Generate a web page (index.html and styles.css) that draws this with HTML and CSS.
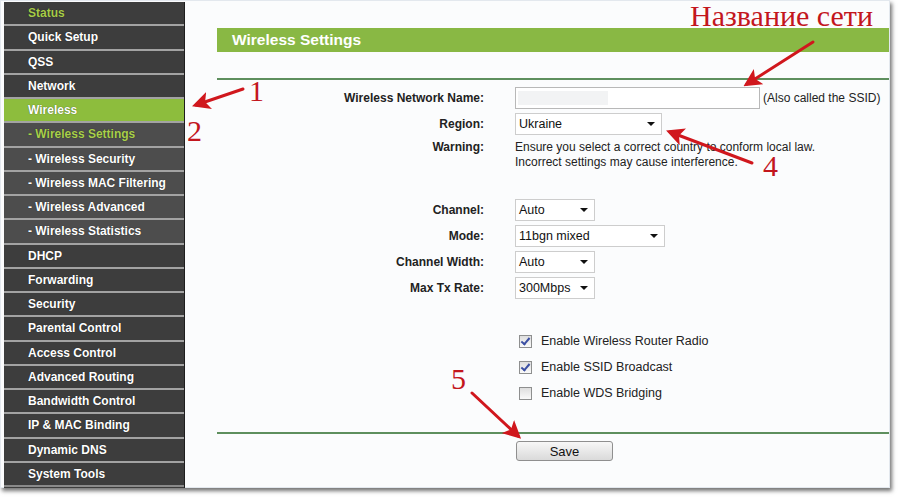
FILE: index.html
```html
<!DOCTYPE html>
<html lang="en">
<head>
    <meta charset="UTF-8">
    <title>Wireless Settings</title>
    <link rel="stylesheet" href="styles.css">
</head>
<body>

    <div class="frame">
        <!-- Left menu -->
        <div class="menu">
            <div class="item status">Status</div>
            <div class="item">Quick Setup</div>
            <div class="item">QSS</div>
            <div class="item">Network</div>
            <div class="item active">Wireless</div>
            <div class="item sub current">- Wireless Settings</div>
            <div class="item sub">- Wireless Security</div>
            <div class="item sub">- Wireless MAC Filtering</div>
            <div class="item sub">- Wireless Advanced</div>
            <div class="item sub">- Wireless Statistics</div>
            <div class="item">DHCP</div>
            <div class="item">Forwarding</div>
            <div class="item">Security</div>
            <div class="item">Parental Control</div>
            <div class="item">Access Control</div>
            <div class="item">Advanced Routing</div>
            <div class="item">Bandwidth Control</div>
            <div class="item">IP &amp; MAC Binding</div>
            <div class="item">Dynamic DNS</div>
            <div class="item">System Tools</div>
        </div>

        <!-- Settings panel -->
        <div class="panel">
            <div class="title-bar">Wireless Settings</div>
            <div class="rule top-rule"></div>

            <div class="row row-name">
                <div class="label">Wireless Network Name:</div>
                <div class="value">
                    <div class="text-box"><span class="blur"></span></div>
                    <span class="note">(Also called the SSID)</span>
                </div>
            </div>
            <div class="row">
                <div class="label">Region:</div>
                <div class="value">
                    <div class="select w-region">Ukraine</div>
                </div>
            </div>
            <div class="row warning">
                <div class="label">Warning:</div>
                <div class="value">Ensure you select a correct country to conform local law.<br>Incorrect settings may cause interference.</div>
            </div>

            <div class="row row-channel">
                <div class="label">Channel:</div>
                <div class="value"><div class="select w-small">Auto</div></div>
            </div>
            <div class="row">
                <div class="label">Mode:</div>
                <div class="value"><div class="select w-mode">11bgn mixed</div></div>
            </div>
            <div class="row">
                <div class="label">Channel Width:</div>
                <div class="value"><div class="select w-small">Auto</div></div>
            </div>
            <div class="row">
                <div class="label">Max Tx Rate:</div>
                <div class="value"><div class="select w-small">300Mbps</div></div>
            </div>

            <div class="checks">
                <div class="check-row"><span class="box checked"></span>Enable Wireless Router Radio</div>
                <div class="check-row"><span class="box checked"></span>Enable SSID Broadcast</div>
                <div class="check-row"><span class="box"></span>Enable WDS Bridging</div>
            </div>

            <div class="rule bottom-rule"></div>
            <div class="actions">
                <button class="save-btn">Save</button>
            </div>
        </div>
    </div>

    <!-- Red notes drawn over the screenshot -->
    <svg class="notes" width="900" height="500" viewBox="0 0 900 500">
        <defs>
            <marker id="head" markerWidth="6" markerHeight="6" refX="4.6" refY="3" orient="auto" markerUnits="strokeWidth">
                <path d="M0,0 L6,3 L0,6 L1.4,3 Z" fill="#d0171d"/>
            </marker>
        </defs>
        <g stroke="#d0171d" stroke-width="3" stroke-linecap="round" fill="none" marker-end="url(#head)">
            <line x1="243" y1="89" x2="196" y2="105"/>
            <line x1="813" y1="42" x2="747" y2="84"/>
            <line x1="752" y1="163" x2="670" y2="132"/>
            <line x1="472" y1="393" x2="518" y2="436"/>
        </g>
        <g class="note-text" fill="#c3161d">
            <text x="690" y="26" font-size="30">Название сети</text>
            <text x="249" y="101" font-size="30">1</text>
            <text x="187" y="141" font-size="30">2</text>
            <text x="763" y="176" font-size="30">4</text>
            <text x="451" y="389" font-size="30">5</text>
        </g>
    </svg>

</body>
</html>
```

FILE: styles.css
```css
* {
    margin: 0;
    padding: 0;
    box-sizing: border-box;
    font-family: 'Liberation Sans', Arial, sans-serif;
}
body {
    width: 900px;
    height: 500px;
    background: #ffffff;
    position: relative;
    overflow: hidden;
}
.frame {
    display: flex;
    width: 890px;
    height: 488px;
    padding: 1px 0 0 3px;
    background: #fbfcfd;
    border: 1px solid #e3e8ee;
    box-shadow: 2px 3px 4px rgba(0, 0, 0, 0.55);
}

/* menu */
.menu {
    width: 181px;
    flex-shrink: 0;
    background: #3d3d3d;
    border-right: 1px solid #1e1e1e;
    height: 486px;
}
.item {
    height: 24.25px;
    padding-left: 24px;
    border-bottom: 2px solid #a3a3a3;
    color: #ffffff;
    font-size: 12px;
    font-weight: bold;
    line-height: 22.25px;
    background: #3d3d3d;
    text-shadow: 0 0 1px rgba(0, 0, 0, 0.6);
}
.item.status {
    color: #a7cc48;
}
.item.active {
    background: #8dbd3d;
}
.item.sub {
    background: #4d4d4d;
}
.item.current {
    color: #a9d04b;
}
.item:last-child {
    border-bottom: 2px solid #8a8a8a;
}

/* panel */
.panel {
    flex: 1;
    padding: 26px 0 0 32px;
    font-size: 12px;
    color: #1a1a1a;
}
.title-bar {
    height: 24px;
    background: #89b844;
    color: #ffffff;
    font-size: 15.5px;
    font-weight: bold;
    line-height: 24px;
    padding-left: 15px;
}
.rule {
    height: 2px;
    background: #5e8f5e;
}
.top-rule {
    margin-top: 26px;
}
.row {
    display: flex;
    align-items: center;
    height: 26px;
}
.row-name {
    margin-top: 5px;
}
.label {
    width: 267px;
    text-align: right;
    font-weight: bold;
    color: #222;
    flex-shrink: 0;
}
.value {
    margin-left: 31px;
    display: flex;
    align-items: center;
}
.warning {
    align-items: flex-start;
    height: auto;
    line-height: 15px;
    padding-top: 3px;
}
.warning .value {
    display: block;
    color: #222;
}
.row-channel {
    margin-top: 27px;
}
.text-box {
    width: 245px;
    height: 22px;
    border: 1px solid #b8b8b8;
    background: #fff;
    padding: 3px 2px;
}
.blur {
    display: block;
    width: 90px;
    height: 14px;
    background: #f2f3f4;
}
.note {
    margin-left: 3px;
    color: #222;
}
.select {
    position: relative;
    height: 22px;
    border: 1px solid #cdcdcd;
    background: #fff;
    line-height: 20px;
    padding-left: 3px;
    font-size: 12.5px;
    color: #111;
}
.select::after {
    content: "";
    position: absolute;
    right: 6px;
    top: 8px;
    border-left: 4px solid transparent;
    border-right: 4px solid transparent;
    border-top: 4px solid #111;
}
.w-region {
    width: 147px;
}
.w-small {
    width: 80px;
}
.w-mode {
    width: 150px;
}

/* checkboxes */
.checks {
    margin-top: 27px;
    padding-left: 302px;
}
.check-row {
    display: flex;
    align-items: center;
    height: 26px;
    font-size: 12.5px;
    color: #222;
}
.box {
    width: 13px;
    height: 13px;
    border: 1px solid #8e8f8f;
    background: linear-gradient(#dedede, #fafafa);
    margin-right: 9px;
    position: relative;
}
.box.checked::after {
    content: "";
    position: absolute;
    left: 3px;
    top: 0px;
    width: 3px;
    height: 7px;
    border-right: 2px solid #3b4fa3;
    border-bottom: 2px solid #3b4fa3;
    transform: rotate(40deg);
}
.bottom-rule {
    margin-top: 26px;
}
.actions {
    padding: 7px 0 0 299px;
}
.save-btn {
    width: 97px;
    height: 20px;
    border: 1px solid #8f8f8f;
    border-radius: 3px;
    background: linear-gradient(#f7f7f7, #dadada);
    font-size: 13px;
    color: #111;
}

/* annotations */
.notes {
    position: absolute;
    left: 0;
    top: 0;
    pointer-events: none;
}
.note-text text {
    font-family: 'Liberation Serif', 'Times New Roman', serif;
}
```
